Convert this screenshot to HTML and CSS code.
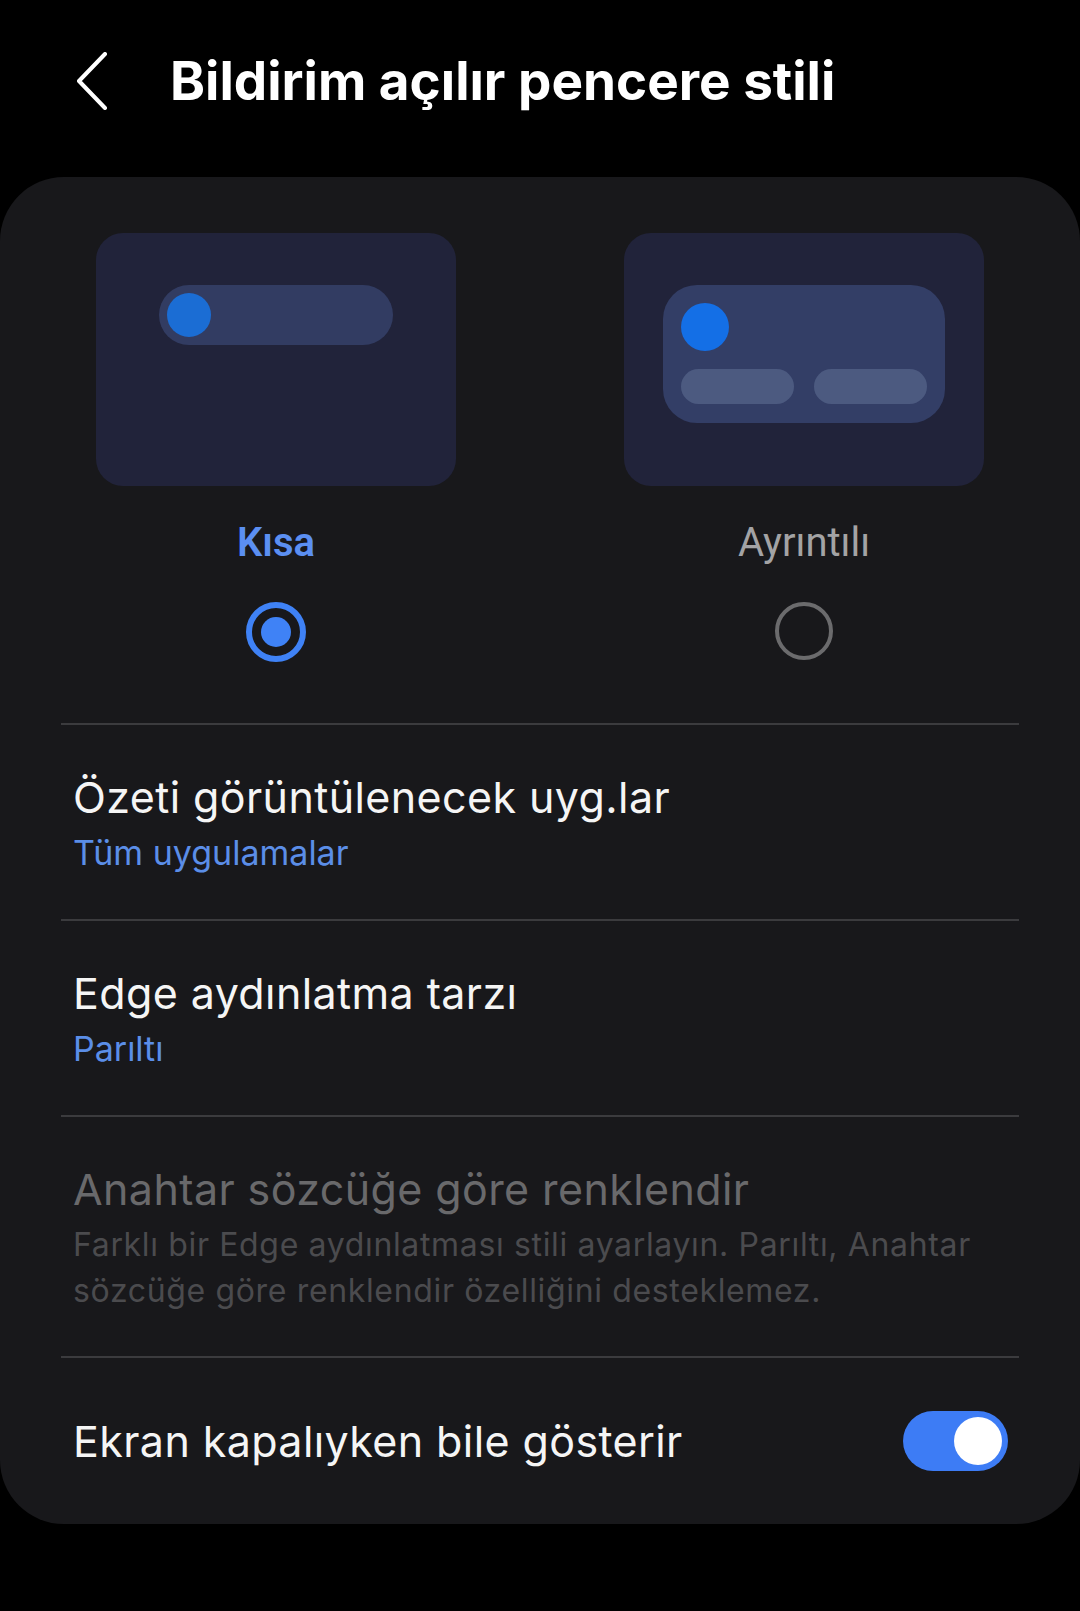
FILE: index.html
```html
<html>

<head>
  <meta name="viewport" content="width=device-width, initial-scale=1.0">
  <link rel="stylesheet" href="styles.css">
</head>

<body>
  <div class="header">
    <svg class="back" width="34" height="58" viewBox="0 0 34 58">
      <polyline points="30,2 4,29 30,56" fill="none" stroke="#ffffff" stroke-width="4" stroke-linecap="round" stroke-linejoin="round" />
    </svg>
    <div class="title">Bildirim açılır pencere stili</div>
  </div>

  <div class="panel">
    <div class="options">
      <div class="option">
        <div class="preview">
          <div class="pill">
            <div class="dot"></div>
          </div>
        </div>
        <div class="option_label selected">Kısa</div>
        <div class="radio on"><div class="radio_dot"></div></div>
      </div>
      <div class="option">
        <div class="preview">
          <div class="detail">
            <div class="dot big"></div>
            <div class="actions">
              <div class="action"></div>
              <div class="action"></div>
            </div>
          </div>
        </div>
        <div class="option_label">Ayrıntılı</div>
        <div class="radio"></div>
      </div>
    </div>

    <div class="list">
      <div class="row">
        <div class="row_title">Özeti görüntülenecek uyg.lar</div>
        <div class="row_sub">Tüm uygulamalar</div>
      </div>
      <div class="row">
        <div class="row_title">Edge aydınlatma tarzı</div>
        <div class="row_sub">Parıltı</div>
      </div>
      <div class="row disabled">
        <div class="row_title">Anahtar sözcüğe göre renklendir</div>
        <div class="row_desc">Farklı bir Edge aydınlatması stili ayarlayın. Parıltı, Anahtar sözcüğe göre renklendir özelliğini desteklemez.</div>
      </div>
      <div class="row switch_row">
        <div class="row_title">Ekran kapalıyken bile gösterir</div>
        <div class="toggle"><div class="knob"></div></div>
      </div>
    </div>
  </div>
</body>

</html>
```

FILE: styles.css
```css
body {
  margin: 0;
  width: 1080px;
  height: 1611px;
  background-color: #000000;
  font-family: Inter, Roboto, "Noto Sans", sans-serif;
  color: #f5f5f5;
  overflow: hidden;
}

.header {
  display: flex;
  align-items: center;
  padding-top: 49px;
  padding-bottom: 64px;
}

.back {
  margin-left: 75px;
  flex-shrink: 0;
}

.title {
  margin-left: 61px;
  font-size: 53px;
  line-height: 64px;
  font-weight: 700;
  color: #ffffff;
}

.panel {
  background-color: #18181b;
  border-radius: 64px;
}

.options {
  display: flex;
  gap: 168px;
  padding: 56px 96px 61px 96px;
}

.option {
  width: 360px;
  display: flex;
  flex-direction: column;
  align-items: center;
}

.preview {
  width: 360px;
  height: 253px;
  box-sizing: border-box;
  padding-top: 52px;
  border-radius: 27px;
  background-color: #21233a;
  display: flex;
  justify-content: center;
  align-items: flex-start;
}

.pill {
  width: 234px;
  height: 60px;
  border-radius: 30px;
  background-color: #323c62;
  display: flex;
  align-items: center;
  padding-left: 8px;
  box-sizing: border-box;
}

.dot {
  width: 44px;
  height: 44px;
  border-radius: 50%;
  background-color: #1b6dd4;
}

.dot.big {
  width: 48px;
  height: 48px;
  background-color: #146fe6;
}

.detail {
  width: 282px;
  height: 138px;
  box-sizing: border-box;
  padding: 18px;
  border-radius: 34px;
  background-color: #333e66;
}

.actions {
  display: flex;
  gap: 20px;
  margin-top: 18px;
}

.action {
  width: 113px;
  height: 35px;
  border-radius: 18px;
  background-color: #4c5a80;
}

.option_label {
  margin-top: 33px;
  font-family: Roboto, sans-serif;
  font-size: 40px;
  line-height: 48px;
  color: #a3a3a5;
}

.option_label.selected {
  color: #5b8ff2;
  font-weight: 600;
}

.radio {
  margin-top: 35px;
  width: 58px;
  height: 58px;
  box-sizing: border-box;
  border: 4px solid #6b6b6d;
  border-radius: 50%;
  display: flex;
  align-items: center;
  justify-content: center;
}

.radio.on {
  width: 60px;
  height: 60px;
  border: 6px solid #3f82f6;
}

.radio_dot {
  width: 30px;
  height: 30px;
  border-radius: 50%;
  background-color: #3f82f6;
}

.list {
  margin: 0 61px;
}

.row {
  border-top: 2px solid #3b3b3e;
  padding: 47px 12px 44px 12px;
}

.row_title {
  font-size: 43px;
  line-height: 50px;
  letter-spacing: 0.4px;
  color: #f5f5f5;
}

.row_sub {
  margin-top: 9px;
  font-size: 34px;
  line-height: 44px;
  color: #5b8ee8;
}

.disabled {
  padding-bottom: 42px;
}

.disabled .row_title {
  color: #69696b;
}

.row_desc {
  margin-top: 8px;
  font-size: 32px;
  line-height: 46px;
  letter-spacing: 0.65px;
  color: #4b4b4e;
}

.switch_row {
  height: 168px;
  box-sizing: border-box;
  padding: 0 11px 0 12px;
  display: flex;
  align-items: center;
  justify-content: space-between;
}

.toggle {
  width: 105px;
  height: 60px;
  border-radius: 30px;
  background-color: #3d7cf5;
  display: flex;
  align-items: center;
  justify-content: flex-end;
  padding-right: 6px;
  box-sizing: border-box;
}

.knob {
  width: 48px;
  height: 48px;
  border-radius: 50%;
  background-color: #ffffff;
}
```
